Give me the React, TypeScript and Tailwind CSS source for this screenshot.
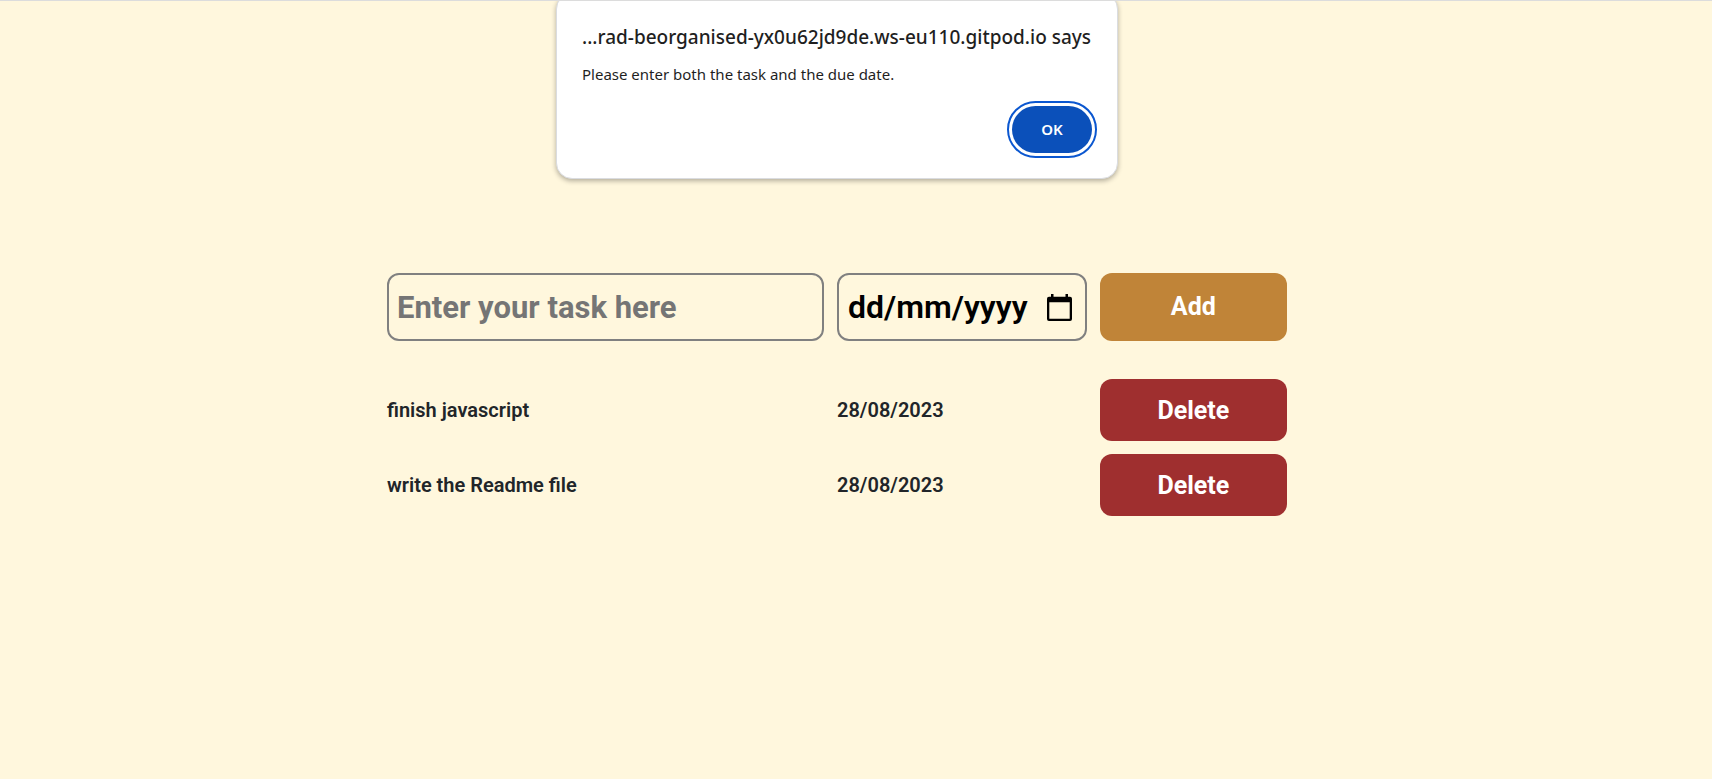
import { useState } from "react";

type Task = { id: number; name: string; due: string };

const initialTasks: Task[] = [
  { id: 1, name: "finish javascript", due: "28/08/2023" },
  { id: 2, name: "write the Readme file", due: "28/08/2023" },
];

function CalendarIcon() {
  return (
    <svg viewBox="0 0 25 27" className="h-[27px] w-[25px]" aria-hidden="true">
      <path
        fill="#000"
        fillRule="evenodd"
        d="M4 0h2.500v2.700h12V0H21v2.700h2A2 2 0 0 1 25 4.700v20.300A2 2 0 0 1 23 27H2A2 2 0 0 1 0 25V4.700A2 2 0 0 1 2 2.700H4zM2.300 8.200v16.500h20.400V8.200z"
      />
    </svg>
  );
}

function AlertDialog({ onClose }: { onClose: () => void }) {
  return (
    <div
      role="alertdialog"
      aria-labelledby="alert-title"
      aria-describedby="alert-text"
      className="absolute -top-2 left-1/2 w-[562px] max-w-full -translate-x-1/2 rounded-2xl border border-[#dadce0] bg-white px-[25px] pt-7 pb-[25px] font-['Noto_Sans','Open_Sans',sans-serif] text-[#1f1f1f] shadow-[0_2px_5px_rgba(0,0,0,0.3)]"
    >
      <h1 id="alert-title" className="text-[19px] leading-[30px] font-medium whitespace-nowrap">
        ...rad-beorganised-yx0u62jd9de.ws-eu110.gitpod.io says
      </h1>
      <p id="alert-text" className="mt-[10px] text-[15px] leading-6">
        Please enter both the task and the due date.
      </p>
      <div className="mt-5 flex justify-end">
        <button
          type="button"
          onClick={onClose}
          className="h-[47px] w-20 rounded-full bg-[#0b50ba] text-[15px] font-semibold text-white outline-2 outline-offset-3 outline-[#0b57d0]"
        >
          OK
        </button>
      </div>
    </div>
  );
}

export default function App() {
  const [tasks, setTasks] = useState(initialTasks);
  const [alertOpen, setAlertOpen] = useState(true);
  const [name, setName] = useState("");
  const [due, setDue] = useState("");

  const addTask = () => {
    if (!name || !due) {
      setAlertOpen(true);
      return;
    }
    setTasks([...tasks, { id: Date.now(), name, due }]);
    setName("");
    setDue("");
  };

  return (
    <div className="min-h-screen overflow-hidden border-t border-[#dcdcdc] bg-[#fff7dd] pr-[38px] font-[Roboto,sans-serif]">
      <div className="relative">
        {alertOpen && <AlertDialog onClose={() => setAlertOpen(false)} />}
        <main className="mx-auto max-w-[900px] pt-[272px]">
          <form
            className="grid grid-cols-[7fr_4fr_3fr] gap-[13px]"
            onSubmit={(event) => {
              event.preventDefault();
              addTask();
            }}
          >
            <input
              type="text"
              aria-label="Task"
              placeholder="Enter your task here"
              value={name}
              onChange={(event) => setName(event.target.value)}
              className="h-[68px] min-w-0 rounded-xl border-2 border-[#808080] px-2 text-[31px] font-bold text-black placeholder:text-[#757575]"
            />
            <div className="flex h-[68px] min-w-0 items-center rounded-xl border-2 border-[#808080] pr-[13px] pl-[9px]">
              <input
                type="text"
                aria-label="Due date"
                placeholder="dd/mm/yyyy"
                value={due}
                onChange={(event) => setDue(event.target.value)}
                className="min-w-0 flex-1 text-[32px] font-semibold text-black placeholder:text-black"
              />
              <button type="button" aria-label="Choose date">
                <CalendarIcon />
              </button>
            </div>
            <button
              type="submit"
              className="h-[68px] rounded-xl bg-[#c08438] text-[25px] font-bold text-white"
            >
              Add
            </button>
          </form>
          <ul className="mt-[38px] flex flex-col gap-[13px]">
            {tasks.map((task) => (
              <li
                key={task.id}
                className="grid grid-cols-[7fr_4fr_3fr] items-center gap-[13px] text-xl font-semibold text-[#212529]"
              >
                <span>{task.name}</span>
                <span>{task.due}</span>
                <button
                  type="button"
                  onClick={() => setTasks(tasks.filter((item) => item.id !== task.id))}
                  className="h-[62px] rounded-xl bg-[#9f2f2f] text-[25px] font-bold text-white"
                >
                  Delete
                </button>
              </li>
            ))}
          </ul>
        </main>
      </div>
    </div>
  );
}
